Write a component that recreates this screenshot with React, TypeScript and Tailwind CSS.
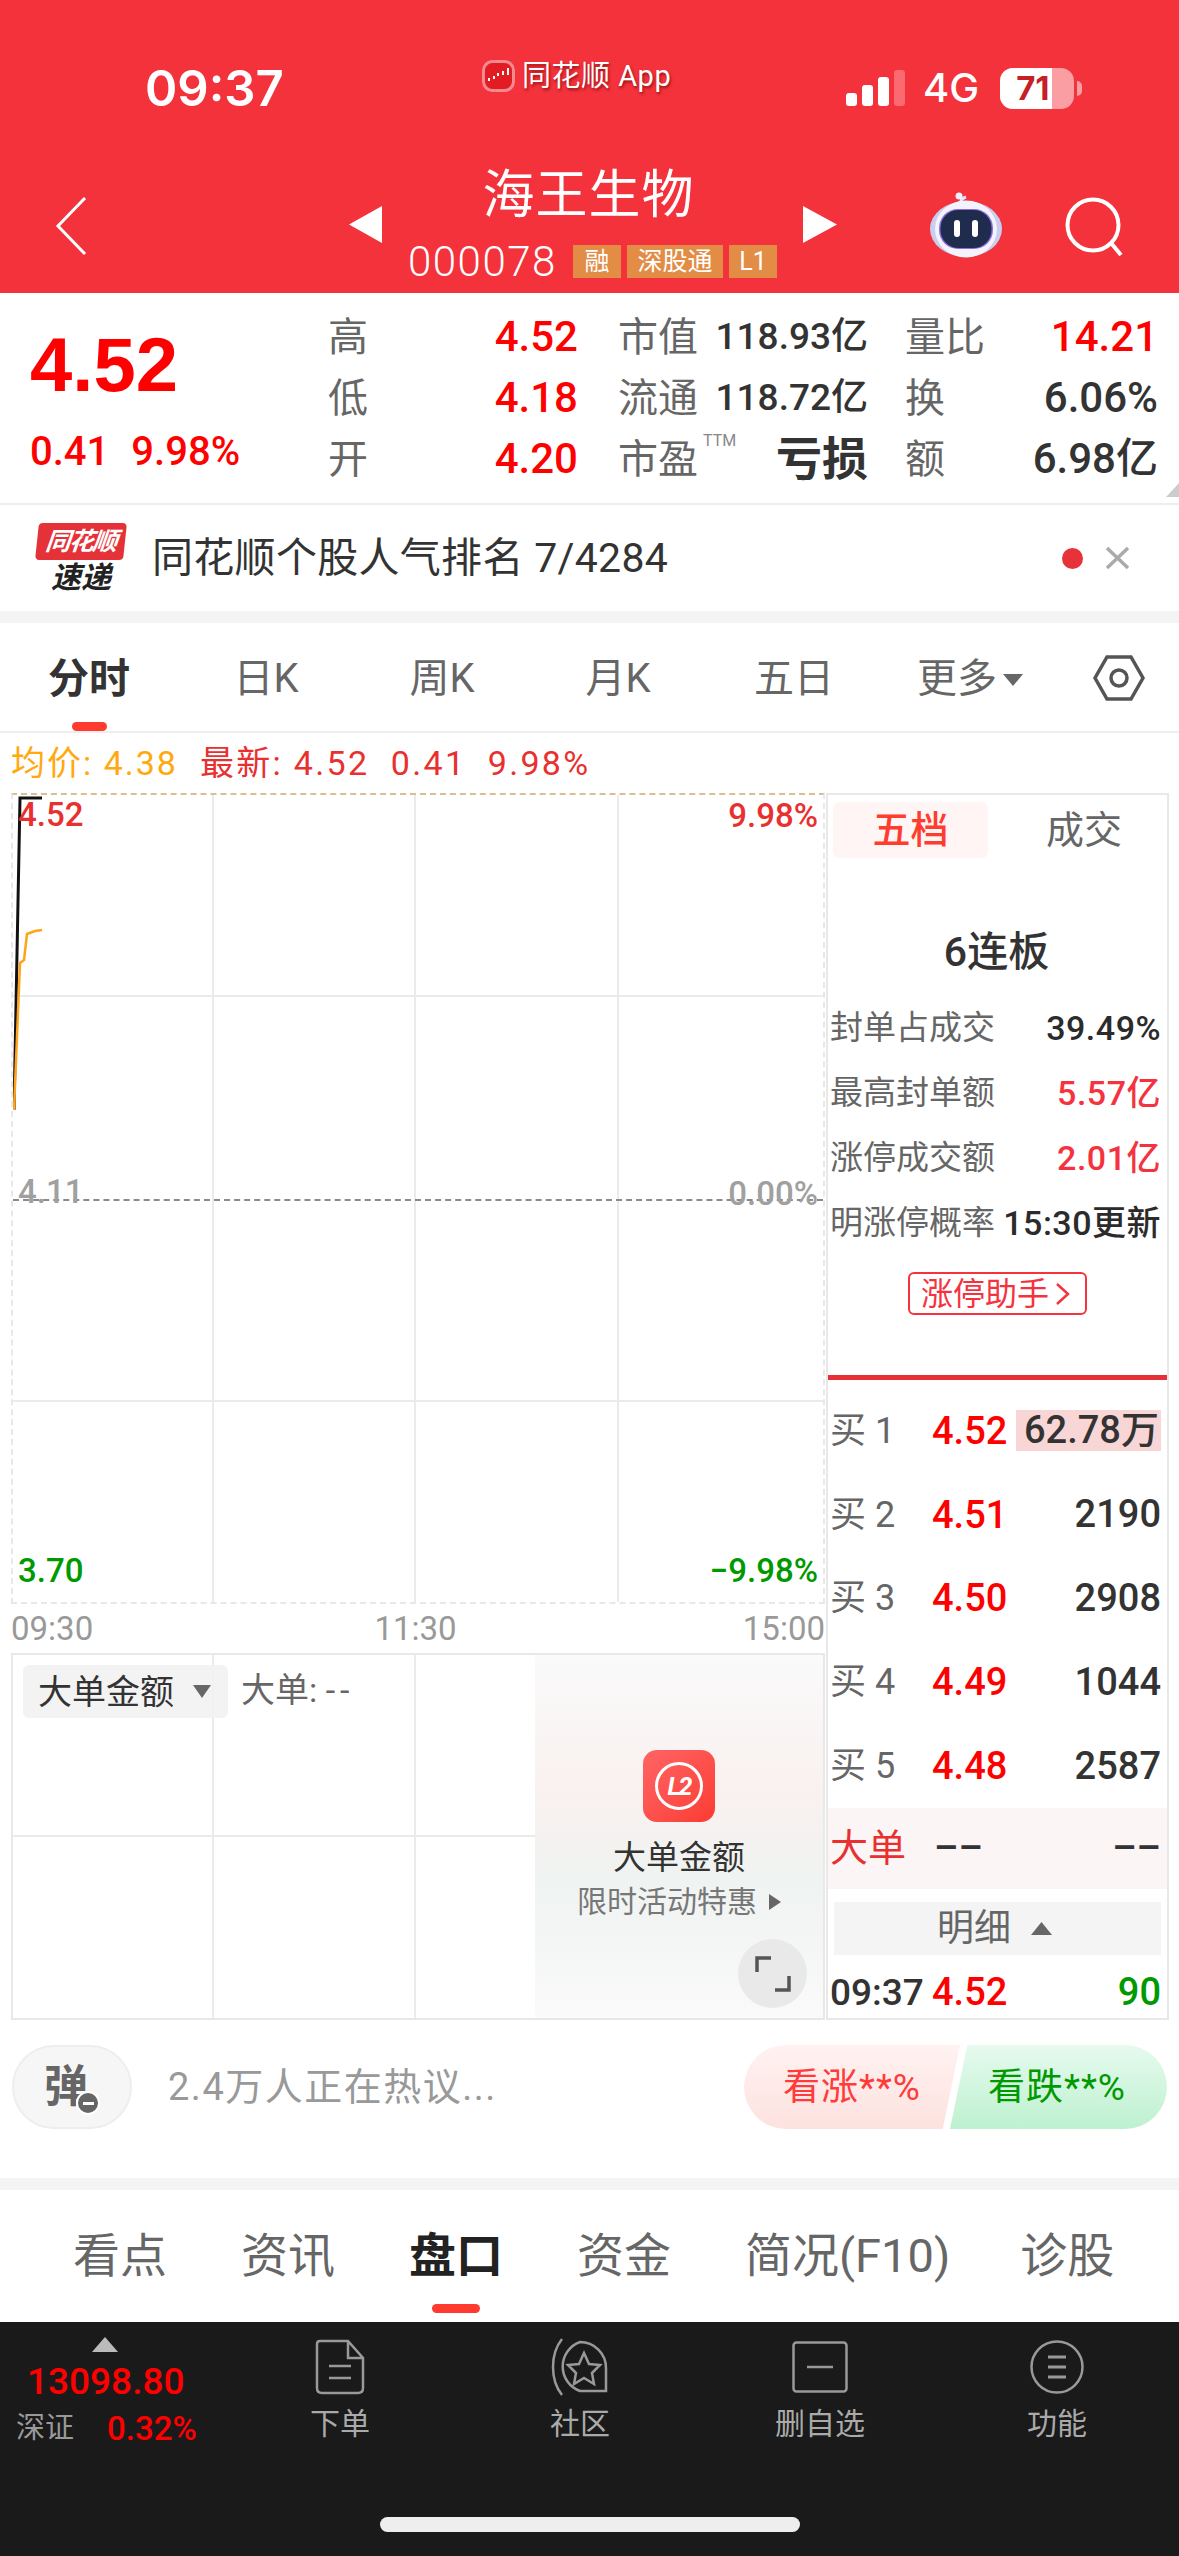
import React from "react";

const FONT = "font-['Roboto','Noto_Sans_CJK_SC',sans-serif]";

function Quote({ label, value, w, labelW, valueClass }: { label: React.ReactNode; value: React.ReactNode; w: number; labelW: number; valueClass: string }) {
  return (
    <div className="flex items-center" style={{ width: labelW + w }}>
      <div className="text-[40px] leading-none text-[#666] shrink-0 -ml-[2px] pt-[3px]" style={{ width: labelW + 2 }}>{label}</div>
      <div className={`text-right leading-none ${valueClass}`} style={{ width: w }}>{value}</div>
    </div>
  );
}

const quoteRows = [
  { a: "高", av: "4.52", b: "市值", bv: "118.93亿", c: "量比", cv: "14.21", cr: true },
  { a: "低", av: "4.18", b: "流通", bv: "118.72亿", c: "换", cv: "6.06%", cr: false },
  { a: "开", av: "4.20", b: "市盈", bv: "亏损", c: "额", cv: "6.98亿", cr: false },
];

const sealRows = [
  { k: "封单占成交", v: "39.49%", c: "text-[#2b2b2b]" },
  { k: "最高封单额", v: "5.57亿", c: "text-[#f5333f]" },
  { k: "涨停成交额", v: "2.01亿", c: "text-[#f5333f]" },
  { k: "明涨停概率", v: "15:30更新", c: "text-[#2b2b2b]" },
];

const bids = [
  { k: "买 1", p: "4.52", v: "62.78万" },
  { k: "买 2", p: "4.51", v: "2190" },
  { k: "买 3", p: "4.50", v: "2908" },
  { k: "买 4", p: "4.49", v: "1044" },
  { k: "买 5", p: "4.48", v: "2587" },
];

function Robot() {
  return (
    <svg width="72" height="66" viewBox="0 0 72 66">
      <path d="M30 14c0-5 2-8 6-9" fill="none" stroke="#e3e6f7" strokeWidth="3" />
      <circle cx="29" cy="4" r="3.5" fill="#eef0fb" />
      <ellipse cx="36" cy="37" rx="36" ry="28" fill="#c9cdf0" />
      <ellipse cx="36" cy="37" rx="31" ry="28.5" fill="#f2f3fc" />
      <rect x="9" y="17" width="54" height="40" rx="19" fill="#8f6de0" />
      <rect x="10.5" y="18" width="51" height="38" rx="18" fill="#1f2c4d" />
      <rect x="24" y="28" width="6" height="17" rx="3" fill="#fff" />
      <rect x="42" y="28" width="6" height="17" rx="3" fill="#fff" />
    </svg>
  );
}

function Grid({ rows }: { rows: number }) {
  const cells = Array.from({ length: rows * 4 });
  return (
    <div className={rows === 4 ? "grid grid-cols-[201px_202px_203px_1fr] grid-rows-[202px_202px_203px_1fr] h-full" : "grid grid-cols-[201px_202px_203px_1fr] grid-rows-2 h-full"}>
      {cells.map((_, i) => (
        <div key={i} className={`border-[#ebebeb] ${i % 4 !== 3 ? "border-r-2" : ""} ${i < (rows - 1) * 4 && !(rows === 4 && i >= 4 && i < 8) ? "border-b-2" : ""}`} />
      ))}
    </div>
  );
}

export default function App() {
  return (
    <div className={`${FONT} w-[1179px] h-[2556px] overflow-hidden bg-white flex flex-col`}>
      {/* Red header with status bar and stock title */}
      <header className="h-[293px] bg-[#f4323c] text-white shrink-0">
        <div className="h-[165px] pt-[58px]">
          <div className="flex h-[60px] items-center">
            <div className="w-[482px] pl-[145px] font-['Inter'] text-[49px] font-semibold leading-none">09:37</div>
            <div className="w-[364px] self-start flex items-center gap-[7px] h-[36px] text-[29px] leading-none tracking-[0.5px] [text-shadow:1px_2px_3px_rgba(110,0,0,0.7)]">
              <svg width="33" height="32" viewBox="0 0 33 32">
                <rect x="1.5" y="1.5" width="30" height="29" rx="9" fill="#e31b23" stroke="#f58a8e" strokeWidth="3" />
                <path d="M6 18h2v3H6zM11 16h2v3h-2zM15 13h2v3h-2zM20 11h2v4h-2zM25 8h2v7h-2z" fill="#fff" />
              </svg>
              <span>同花顺 App</span>
            </div>
            <div className="flex items-end gap-[5px] h-[36px]">
              <div className="w-[11px] h-[13px] rounded-[3px] bg-white" />
              <div className="w-[11px] h-[21px] rounded-[3px] bg-white" />
              <div className="w-[11px] h-[29px] rounded-[3px] bg-white" />
              <div className="w-[11px] h-[36px] rounded-[3px] bg-[#fb6a70]" />
            </div>
            <div className="ml-[18px] font-['Inter'] text-[40px] font-medium leading-none">4G</div>
            <div className="ml-[21px] flex items-center">
              <div className="relative w-[74px] h-[41px] rounded-[13px] overflow-hidden bg-[#fa9ea3]">
                <div className="w-[52px] h-full bg-white" />
                <span className="absolute left-[16px] top-[4px] text-[33px] font-bold leading-[33px] text-[#c51f28] font-['Inter']">71</span>
              </div>
              <div className="ml-[3px] w-[5px] h-[15px] rounded-r-full bg-[#fa9ea3]" />
            </div>
          </div>
        </div>
        <div className="flex items-start">
          <div className="w-[349px] pl-[55px] pt-[32px]">
            <svg width="32" height="58" viewBox="0 0 32 58"><path d="M30 1 3 29l27 28" fill="none" stroke="#fff" strokeWidth="3" /></svg>
          </div>
          <div className="pt-[41px]"><svg width="33" height="37" viewBox="0 0 33 37"><path d="M33 0v37L0 18.5z" fill="#fff" /></svg></div>
          <div className="w-[421px] flex flex-col items-center pt-[3px]">
            <div className="text-[52px] leading-[56px] tracking-[1px] pr-[8px]">海王生物</div>
            <div className="mt-[21px] flex items-center h-[33px]">
              <span className="text-[42px] leading-none font-light tracking-[1.5px] w-[165px]">000078</span>
              <span className="w-[48px] h-[33px] bg-[#e38c46] text-[25px] leading-[33px] text-center">融</span>
              <span className="ml-[6px] w-[96px] h-[33px] bg-[#e38c46] text-[25px] leading-[33px] text-center">深股通</span>
              <span className="ml-[6px] w-[48px] h-[33px] bg-[#e38c46] text-[25px] leading-[33px] text-center">L1</span>
            </div>
          </div>
          <div className="pt-[41px]"><svg width="34" height="37" viewBox="0 0 34 37"><path d="M0 0v37l34-18.5z" fill="#fff" /></svg></div>
          <div className="ml-[93px] pt-[27px]"><Robot /></div>
          <div className="ml-[63px] pt-[32px]">
            <svg width="60" height="60" viewBox="0 0 60 60"><circle cx="28" cy="28" r="25.5" fill="none" stroke="#fff" strokeWidth="4" /><path d="m46 46 10 12" stroke="#fff" strokeWidth="4" /></svg>
          </div>
        </div>
      </header>

      {/* Price summary */}
      <section className="relative h-[210px] flex shrink-0">
        <div className="w-[330px] pl-[30px] pt-[36px]">
          <div className="h-[72px] text-[76px] leading-[72px] font-bold text-[#ff0000] font-['Liberation_Sans']">4.52</div>
          <div className="mt-[33px] h-[36px] text-[40px] leading-[36px] font-medium text-[#ff0000] flex gap-[22px]"><span>0.41</span><span>9.98%</span></div>
        </div>
        <div className="pt-[13px] flex flex-col">
          {quoteRows.map((r, i) => (
            <div key={r.a} className="h-[61px] flex items-center">
              <Quote label={r.a} value={r.av} labelW={100} w={148} valueClass="text-[42px] font-medium text-[#ff0000]" />
              <div className="w-[41px]" />
              <div className="w-[84px] relative text-[40px] leading-none text-[#666] -ml-[1px] pt-[3px]">
                {r.b}
                {i === 2 && <span className="absolute left-[85px] top-[-4px] text-[16px] leading-none text-[#888]">TTM</span>}
              </div>
              <div className={`w-[166px] text-right leading-none text-[#333] ${i === 2 ? "text-[46px] font-bold" : "text-[37px] font-medium"}`}>{r.bv}</div>
              <div className="w-[39px]" />
              <Quote label={r.c} value={r.cv} labelW={100} w={151} valueClass={`text-[42px] font-medium ${r.cr ? "text-[#ff0000]" : "text-[#333]"}`} />
            </div>
          ))}
        </div>
        <svg className="absolute right-0 bottom-[6px]" width="21" height="14" viewBox="0 0 21 14"><path d="M21 0v14H8z" fill="#ccc" /></svg>
      </section>
      <div className="h-[2px] bg-[#eeeeee] shrink-0" />

      {/* News ticker */}
      <section className="h-[106px] flex items-center pl-[37px] shrink-0">
        <div className="w-[88px] flex flex-col items-center">
          <div className="w-[88px] h-[37px] rounded-[4px] bg-[#e53238] text-white text-[25px] leading-[37px] font-bold italic text-center tracking-[-1.5px] -skew-x-6">同花顺</div>
          <div className="mt-[3px] text-[30px] leading-[30px] font-bold italic text-[#222]">速递</div>
        </div>
        <div className="ml-[27px] text-[41px] leading-none text-[#333] tracking-[0.3px]">同花顺个股人气排名 7/4284</div>
        <div className="ml-auto w-[21px] h-[21px] rounded-full bg-[#e8323a]" />
        <svg className="ml-[22px] mr-[49px]" width="25" height="24" viewBox="0 0 25 24"><path d="m2 2 21 20M23 2 2 22" stroke="#aaa" strokeWidth="3.5" /></svg>
      </section>
      <div className="h-[12px] bg-[#f4f4f4] shrink-0" />

      {/* Chart period tabs */}
      <nav className="h-[108px] flex text-[40px] leading-[44px] text-[#666] shrink-0">
        <div className="w-[178px] flex flex-col items-center pt-[34px]">
          <span className="font-bold text-[#333] text-[41px]">分时</span>
          <span className="mt-auto w-[35px] h-[9px] rounded-full bg-[#ff3b30]" />
        </div>
        {["日K", "周K", "月K", "五日"].map((t) => (
          <div key={t} className="w-[176px] text-center pt-[34px]">{t}</div>
        ))}
        <div className="w-[176px] flex items-start justify-center pt-[34px] gap-[6px]">
          <span>更多</span>
          <svg className="mt-[17px]" width="20" height="12" viewBox="0 0 20 12"><path d="M0 0h20L10 12z" fill="#666" /></svg>
        </div>
        <div className="flex-1 flex justify-center pt-[32px]">
          <svg width="52" height="46" viewBox="0 0 52 46"><path d="M14 2h24l12 21-12 21H14L2 23z" fill="none" stroke="#555" strokeWidth="3.5" /><circle cx="26" cy="23" r="8" fill="none" stroke="#555" strokeWidth="3.5" /></svg>
        </div>
      </nav>
      <div className="h-[2px] bg-[#eeeeee] shrink-0" />

      <div className="h-[60px] flex items-center pl-[11px] text-[34px] leading-none tracking-[2px] shrink-0">
        <span className="text-[#ffa90f] w-[189px] whitespace-nowrap">均价: 4.38</span>
        <span className="text-[#e93030] tracking-[2.3px]">最新: 4.52&nbsp;&nbsp;0.41&nbsp;&nbsp;9.98%</span>
      </div>

      <div className="flex pl-[11px] h-[1227px] shrink-0">
        <div className="w-[814px] flex flex-col">
          {/* Intraday price chart */}
          <div className="relative h-[811px] border-t-2 border-dashed border-t-[#d8c094] border-x-2 border-x-[#e8e8e8] border-b-2 border-b-[#e8e8e8]">
            <Grid rows={4} />
            <div className="absolute left-0 right-0 top-[404px] border-t-2 border-dashed border-[#8a8a8a]" />
            <svg className="absolute left-0 top-0" width="40" height="330" viewBox="0 0 40 330">
              <path d="M1 315 7 3h22" fill="none" stroke="#111" strokeWidth="3" />
              <path d="M1 315 7 168l4-3 3-26 8-3 7-1" fill="none" stroke="#ffa31a" strokeWidth="2.5" />
            </svg>
            <span className="absolute left-[5px] top-[2px] text-[33px] leading-[36px] font-medium text-[#e93030]">4.52</span>
            <span className="absolute right-[5px] top-[3px] text-[33px] leading-[36px] font-medium text-[#e93030]">9.98%</span>
            <span className="absolute left-[5px] top-[379px] text-[33px] leading-[36px] font-medium text-[#a0a0a0]">4.11</span>
            <span className="absolute right-[5px] top-[381px] text-[33px] leading-[36px] font-medium text-[#a0a0a0]">0.00%</span>
            <span className="absolute left-[5px] bottom-[13px] text-[33px] leading-[36px] font-medium text-[#009900]">3.70</span>
            <span className="absolute right-[5px] bottom-[13px] text-[33px] leading-[36px] font-medium text-[#009900]">−9.98%</span>
          </div>
          <div className="h-[49px] flex items-center justify-between text-[33px] leading-none text-[#999]">
            <span>09:30</span><span className="mr-[5px]">11:30</span><span>15:00</span>
          </div>
          {/* Order flow panel, locked behind the upgrade card */}
          <div className="relative h-[367px] border-2 border-[#e8e8e8]">
            <Grid rows={2} />
            <div className="absolute left-[10px] top-[10px] w-[205px] h-[53px] rounded-[6px] bg-[#f2f2f2]/90 flex items-center pl-[15px] text-[34px] leading-none text-[#333]">
              大单金额
              <svg className="ml-[19px]" width="18" height="13" viewBox="0 0 18 13"><path d="M0 0h18L9 13z" fill="#666" /></svg>
            </div>
            <span className="absolute left-[228px] top-[18px] text-[34px] leading-none text-[#666]">大单: <span className="tracking-[5px]">--</span></span>
            <div className="absolute left-[522px] top-0 bottom-0 right-0 bg-[linear-gradient(180deg,#fafafa_0%,#f9f1f0_38%,#eff3f1_62%,#fafafa_100%)] flex flex-col items-center pt-[95px]">
              <div className="w-[72px] h-[72px] rounded-[14px] bg-gradient-to-br from-[#ff6464] to-[#fb3a32] flex items-center justify-center">
                <div className="w-[48px] h-[48px] rounded-full border-[3px] border-white flex items-center justify-center text-[25px] leading-none font-bold italic text-white tracking-[-2px]">L2</div>
              </div>
              <div className="mt-[17px] text-[33px] leading-[38px] text-[#333]">大单金额</div>
              <div className="mt-[7px] flex items-center gap-[12px] text-[30px] leading-[36px] text-[#777]">
                限时活动特惠
                <svg width="12" height="16" viewBox="0 0 12 16"><path d="M0 0v16l12-8z" fill="#666" /></svg>
              </div>
            </div>
            <div className="absolute left-[725px] top-[284px] w-[69px] h-[69px] rounded-full bg-[#e9e9e9] flex items-center justify-center">
              <svg width="36" height="36" viewBox="0 0 36 36"><path d="M2 16V2h14M34 20v14H20" fill="none" stroke="#555" strokeWidth="3.5" /></svg>
            </div>
          </div>
        </div>

        {/* Order book column */}
        <aside className="ml-[1px] w-[343px] border-2 border-[#e8e8e8] flex flex-col">
          <div className="mt-[7px] flex h-[56px] ml-[5px]">
            <div className="w-[155px] shrink-0 rounded-[6px] bg-[#fff5f4] text-center text-[38px] leading-[56px] font-medium text-[#ff3c30]">五档</div>
            <div className="ml-[16px] w-[160px] shrink-0 text-center text-[38px] leading-[56px] text-[#666]">成交</div>
          </div>
          <div className="mt-[72px] h-[44px] text-center text-[41px] leading-[44px] font-medium text-[#333] pr-[2px]">6连板</div>
          <div className="mt-[21px]">
            {sealRows.map((r) => (
              <div key={r.k} className="h-[65px] flex items-center justify-between pl-[2px] pr-[6px] text-[33px] leading-none whitespace-nowrap">
                <span className="text-[#666]">{r.k}</span>
                <span className={`font-medium text-[34px] tracking-[0.5px] ${r.c}`}>{r.v}</span>
              </div>
            ))}
          </div>
          <div className="mt-[17px] mx-auto w-[179px] h-[43px] border-2 border-[#f5333f] rounded-[6px] flex items-center justify-center gap-[6px] text-[32px] leading-none text-[#f5333f] pr-[4px]">
            涨停助手
            <svg width="15" height="24" viewBox="0 0 15 24"><path d="m2 2 11 10L2 22" fill="none" stroke="#f5333f" strokeWidth="2.5" /></svg>
          </div>
          <div className="mt-[60px] h-[5px] bg-[#e62f36]" />
          <div className="pt-[9px]">
            {bids.map((b, i) => (
              <div key={b.k} className="h-[83.8px] flex items-center pl-[2px] pr-[6px]">
                <span className="w-[102px] text-[36px] leading-none text-[#666]">{b.k}</span>
                <span className="text-[38px] leading-none font-medium text-[#ff0000]">{b.p}</span>
                <span className={`ml-auto text-[38px] leading-[41px] font-medium text-[#333] ${i === 0 ? "bg-[#f9d6d6] pl-[8px] w-[145px] whitespace-nowrap" : ""}`}>{b.v}</span>
              </div>
            ))}
          </div>
          <div className="h-[81px] bg-[#fcf5f5] flex items-center pl-[2px] pr-[6px]">
            <span className="w-[104px] text-[38px] leading-none text-[#e93030]">大单</span>
            <span className="text-[38px] leading-none font-medium text-[#333]">––</span>
            <span className="ml-auto text-[38px] leading-none font-medium text-[#333]">––</span>
          </div>
          <div className="mt-[13px] mx-[6px] h-[53px] bg-[#f4f4f4] flex items-center justify-center gap-[20px] text-[37px] leading-none text-[#666] pr-[6px]">
            明细
            <svg width="21" height="13" viewBox="0 0 21 13"><path d="M10.5 0 21 13H0z" fill="#666" /></svg>
          </div>
          <div className="flex-1 flex items-center pl-[2px] pr-[6px] pt-[12px] text-[37px] leading-none font-medium">
            <span className="w-[102px] text-[#333]">09:37</span>
            <span className="text-[38px] text-[#ff0000]">4.52</span>
            <span className="ml-auto text-[38px] text-[#009900]">90</span>
          </div>
        </aside>
      </div>

      {/* Comment bar with sentiment vote */}
      <div className="mt-[25px] h-[84px] flex items-center pl-[12px] shrink-0">
        <div className="relative w-[120px] h-[84px] rounded-full bg-[#f6f6f6] border-2 border-[#eeeeee] flex items-center justify-center text-[44px] leading-none font-bold text-[#666]">
          <span className="-ml-[12px]">弹</span>
          <span className="absolute left-[62px] top-[44px] w-[24px] h-[24px] rounded-full bg-[#666] border-2 border-white flex items-center justify-center">
            <span className="w-[11px] h-[3px] bg-white" />
          </span>
        </div>
        <div className="ml-[36px] text-[38px] leading-none text-[#999] tracking-[1.5px]">2.4万人正在热议...</div>
        <div className="ml-auto mr-[12px] flex">
          <div className="w-[216px] h-[84px] rounded-l-full bg-gradient-to-b from-[#fff2f1] to-[#fde2df] [clip-path:polygon(0_0,100%_0,92%_100%,0_100%)] flex items-center pl-[39px] text-[37px] leading-none tracking-[1px] text-[#ff3b3b]">看涨**%</div>
          <div className="-ml-[10px] w-[217px] h-[84px] rounded-r-full bg-gradient-to-b from-[#e6faee] to-[#bdf1d0] [clip-path:polygon(8%_0,100%_0,100%_100%,0_100%)] flex items-center pl-[38px] text-[37px] leading-none tracking-[1px] text-[#009900]">看跌**%</div>
        </div>
      </div>

      <div className="mt-[49px] h-[12px] bg-[#f4f4f4] shrink-0" />

      {/* Detail section tabs */}
      <nav className="h-[132px] flex gap-[74px] pl-[73px] pt-[42px] text-[47px] leading-[48px] text-[#666] shrink-0">
        <span>看点</span>
        <span>资讯</span>
        <span className="relative font-bold text-[#222]">
          盘口
          <span className="absolute left-[23px] top-[72px] w-[48px] h-[9px] rounded-full bg-[#ff3b30]" />
        </span>
        <span>资金</span>
        <span>简况(F10)</span>
        <span className="-ml-[4px]">诊股</span>
      </nav>

      {/* Dark bottom bar */}
      <footer className="flex-1 bg-[#1a1a1a] flex flex-col">
        <div className="h-[195px] flex pt-[15px]">
          <div className="w-[220px] flex flex-col">
            <svg className="ml-[92px]" width="26" height="15" viewBox="0 0 26 15"><path d="M13 0 26 15H0z" fill="#bbb" /></svg>
            <div className="mt-[10px] pl-[27px] text-[37px] leading-[40px] font-medium text-[#ff0000]">13098.80</div>
            <div className="mt-[10px] pl-[16px] flex items-center">
              <span className="text-[29px] leading-none text-[#999]">深证</span>
              <span className="ml-[33px] text-[33px] leading-none font-medium text-[#ff0000]">0.32%</span>
            </div>
          </div>
          <div className="w-[240px] flex flex-col items-center">
            <div className="h-[59px] flex items-center">
              <svg width="50" height="56" viewBox="0 0 50 56" fill="none" stroke="#999" strokeWidth="2.5"><path d="M5 2h28l15 17v30q0 5-5 5H7q-5 0-5-5V5q0-3 3-3zM33 2v17h15M14 27h22M14 39h22" /></svg>
            </div>
            <span className="mt-[13px] text-[30px] leading-none text-[#aaa]">下单</span>
          </div>
          <div className="w-[240px] flex flex-col items-center">
            <div className="h-[59px] flex items-center -ml-[4px]">
              <svg width="60" height="58" viewBox="0 0 60 58" fill="none" stroke="#999" strokeWidth="2.5"><path d="M14 1C2 16 2 42 14 57" /><path d="M32 4a26 26 0 0 1 26 26v23H32a26 26 0 0 1 0-49z" /><path d="m36 15 5 11 11 1-8 8 2 11-10-6-10 6 2-11-8-8 11-1z" /></svg>
            </div>
            <span className="mt-[13px] text-[30px] leading-none text-[#aaa]">社区</span>
          </div>
          <div className="w-[240px] flex flex-col items-center">
            <div className="h-[59px] flex items-center">
              <svg width="56" height="52" viewBox="0 0 56 52" fill="none" stroke="#999" strokeWidth="2.5"><rect x="1.5" y="1.5" width="53" height="49" rx="3" /><path d="M15 26h26" /></svg>
            </div>
            <span className="mt-[13px] text-[30px] leading-none text-[#aaa]">删自选</span>
          </div>
          <div className="w-[234px] flex flex-col items-center">
            <div className="h-[59px] flex items-center">
              <svg width="54" height="54" viewBox="0 0 54 54" fill="none" stroke="#999" strokeWidth="2.5"><circle cx="27" cy="27" r="25.5" /><path d="M18 17h18M18 27h18M18 37h18" strokeWidth="3" /></svg>
            </div>
            <span className="mt-[13px] text-[30px] leading-none text-[#aaa]">功能</span>
          </div>
        </div>
        <div className="mx-auto w-[420px] h-[15px] rounded-full bg-[#eeeeee]" />
      </footer>
    </div>
  );
}
